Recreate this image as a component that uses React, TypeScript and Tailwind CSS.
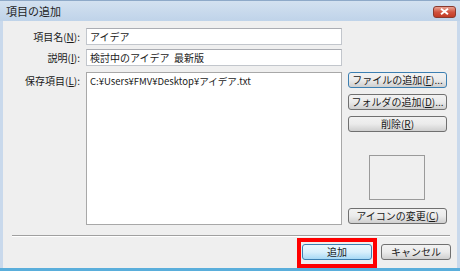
import React from "react";

const FONT = { fontFamily: '"Noto Sans CJK JP", "Noto Sans", sans-serif' };

function Btn({
  children,
  focused,
  primary,
  className = "",
}: {
  children: React.ReactNode;
  focused?: boolean;
  primary?: boolean;
  className?: string;
}) {
  const face = primary
    ? "bg-gradient-to-b from-[#eaf6fd] via-[#d9f0fc] to-[#a7d9f5] border-[#3c7fb1]"
    : focused
    ? "bg-gradient-to-b from-[#f2f2f2] via-[#ebebeb] to-[#cfcfcf] border-[#3c7fb1]"
    : "bg-gradient-to-b from-[#f2f2f2] via-[#ebebeb] to-[#cfcfcf] border-[#707070]";
  return (
    <div
      className={`flex items-center justify-center h-[16px] rounded-[3px] border text-[10px] leading-none text-[#1a1a1a] ${face} ${className}`}
    >
      {children}
    </div>
  );
}

function Label({ text, k }: { text: string; k: string }) {
  return (
    <div className="text-right text-[10px] leading-[17px] text-[#1a1a1a] pr-[1px]">
      {text}(<span className="underline">{k}</span>):
    </div>
  );
}

export default function App() {
  return (
    <div
      className="w-[460px] h-[271px] flex flex-col bg-[#c9d9ec] overflow-hidden"
      style={FONT}
    >
      {/* title bar */}
      <div className="h-[21px] flex items-center justify-between pl-[6px] pr-[4px] bg-gradient-to-b from-[#d3e1f0] to-[#bfd3e9] border-t border-[#8ea9c8]">
        <span className="text-[11px] text-[#1e1e1e] mt-[1px]">項目の追加</span>
        <div className="w-[23px] h-[12px] rounded-[3px] border border-[#8a3a2e] bg-gradient-to-b from-[#e8a293] via-[#d1533f] to-[#c23b24] flex items-center justify-center mt-[1px]">
          <svg width="9" height="7" viewBox="0 0 9 7">
            <path d="M1 0.8 L8 6.2 M8 0.8 L1 6.2" stroke="#fff" strokeWidth="2" />
          </svg>
        </div>
      </div>

      {/* body */}
      <div className="flex-1 mx-[3px] bg-[#efefef] flex flex-col">
        <div className="grid grid-cols-[78px_256px_100px] gap-x-[5px] pt-[7px] pl-0">
          <Label text="項目名" k="N" />
          <div className="h-[17px] border border-[#c2c6cc] border-t-[#abadb3] bg-white text-[10px] leading-[15px] pl-[3px] text-[#1a1a1a]">
            アイデア
          </div>
          <div />

          <div className="col-span-3 h-[4px]" />

          <Label text="説明" k="I" />
          <div className="h-[17px] border border-[#c2c6cc] border-t-[#abadb3] bg-white text-[10px] leading-[15px] pl-[3px] text-[#1a1a1a]">
            検討中のアイデア&nbsp;&nbsp;最新版
          </div>
          <div />

          <div className="col-span-3 h-[6px]" />

          <Label text="保存項目" k="L" />
          <div className="h-[153px] border border-[#a8a8a8] bg-white text-[9.5px] leading-[14px] pl-[3px] pt-[1px] text-[#1a1a1a]">
            C:¥Users¥FMV¥Desktop¥アイデア.txt
          </div>
          <div className="flex flex-col ml-[1px]">
            <Btn focused>
              ファイルの追加(<span className="underline">F</span>)...
            </Btn>
            <Btn className="mt-[6px]">
              フォルダの追加(<span className="underline">D</span>)...
            </Btn>
            <Btn className="mt-[6px]">
              削除(<span className="underline">R</span>)
            </Btn>
            <div className="mt-[23px] ml-[21px] w-[56px] h-[45px] border border-[#9a9a9a] bg-[#efefef]" />
            <Btn className="mt-[8px]">
              アイコンの変更(<span className="underline">C</span>)
            </Btn>
          </div>
        </div>

        <div className="mt-[10px] ml-[9px] mr-[7px] h-[2px] border-t border-[#a0a0a0] border-b border-b-white" />

        <div className="flex justify-end items-start gap-[4px] pr-[6px] mt-[1px]">
          <div className="border-[4px] border-[#ff0000] px-[1px] pt-[2px] pb-[4px]">
            <Btn primary className="w-[70px]">
              追加
            </Btn>
          </div>
          <Btn className="w-[70px] mt-[6px]">キャンセル</Btn>
        </div>
      </div>

      <div className="h-[3px] bg-[#5aaedb] mx-[0px]" />
    </div>
  );
}
